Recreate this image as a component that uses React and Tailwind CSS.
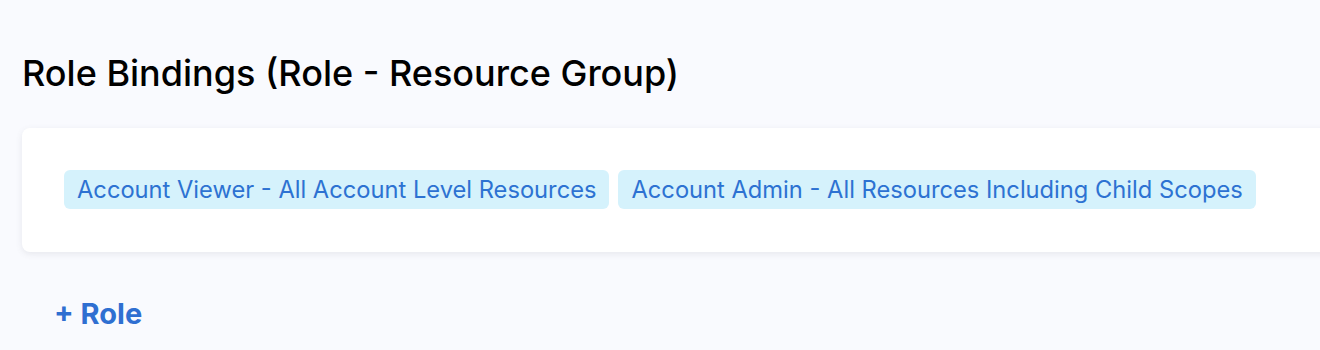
export default function App() {
  const roles = [
    'Account Viewer - All Account Level Resources',
    'Account Admin - All Resources Including Child Scopes',
  ]

  return (
    <div className="min-h-[350px] w-full overflow-hidden bg-[#f9fafe] font-['Inter',sans-serif]">
      <div className="pl-[22px] pt-[51px]">
        <h1 className="text-[36px] leading-[44px] font-medium text-black">Role Bindings (Role - Resource Group)</h1>

        <section className="mt-[33px] w-[1320px] rounded-lg bg-white px-[42px] pt-[42px] pb-[43px] shadow-[0_2px_6px_rgba(96,97,112,0.12)]">
          <div className="flex gap-[9px]">
            {roles.map((role) => (
              <span
                key={role}
                className="rounded-md bg-[#d5f2fc] px-[13px] text-[23.7px] leading-[39px] text-[#2d72d2]"
              >
                {role}
              </span>
            ))}
          </div>
        </section>

        <button className="mt-[46px] ml-[32px] text-[29px] leading-[32px] font-bold text-[#2f6fd1]">+ Role</button>
      </div>
    </div>
  )
}
